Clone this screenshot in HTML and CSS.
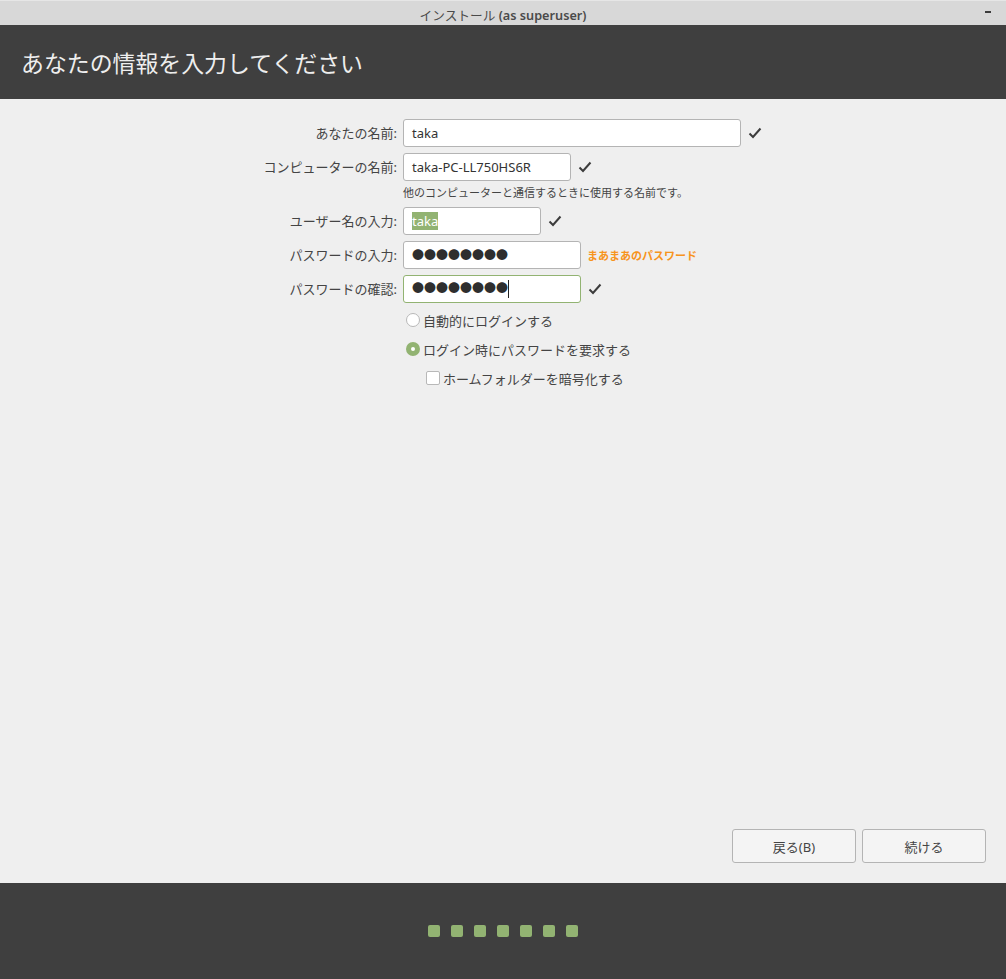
FILE: index.html
```html
<!DOCTYPE html>
<html lang="ja">
<head>
    <meta charset="UTF-8">
    <meta name="viewport" content="width=device-width, initial-scale=1.0">
    <title>インストール (as superuser)</title>
    <link rel="stylesheet" href="styles.css">
</head>
<body>
    <div class="window">
        <div class="titlebar">
            <span class="titlebar-text">インストール <b>(as superuser)</b></span>
            <span class="minimize"></span>
        </div>

        <div class="header">
            <h1>あなたの情報を入力してください</h1>
        </div>

        <div class="content">
            <div class="form">
                <div class="row">
                    <div class="label">あなたの名前:</div>
                    <div class="field field-name">taka</div>
                    <svg class="check" viewBox="0 0 14 12"><path d="M1.5 6.5 5 10 12.5 1.5"/></svg>
                </div>
                <div class="row">
                    <div class="label">コンピューターの名前:</div>
                    <div class="field field-host">taka-PC-LL750HS6R</div>
                    <svg class="check" viewBox="0 0 14 12"><path d="M1.5 6.5 5 10 12.5 1.5"/></svg>
                </div>
                <div class="hint">他のコンピューターと通信するときに使用する名前です。</div>
                <div class="row">
                    <div class="label">ユーザー名の入力:</div>
                    <div class="field field-user"><span class="selected">taka</span></div>
                    <svg class="check" viewBox="0 0 14 12"><path d="M1.5 6.5 5 10 12.5 1.5"/></svg>
                </div>
                <div class="row">
                    <div class="label">パスワードの入力:</div>
                    <div class="field field-pass"><span class="dots">●●●●●●●●</span></div>
                    <span class="strength">まあまあのパスワード</span>
                </div>
                <div class="row">
                    <div class="label">パスワードの確認:</div>
                    <div class="field field-pass focused"><span class="dots">●●●●●●●●</span><span class="caret"></span></div>
                    <svg class="check" viewBox="0 0 14 12"><path d="M1.5 6.5 5 10 12.5 1.5"/></svg>
                </div>

                <div class="option option-first">
                    <span class="radio"></span>
                    <span>自動的にログインする</span>
                </div>
                <div class="option">
                    <span class="radio checked"></span>
                    <span>ログイン時にパスワードを要求する</span>
                </div>
                <div class="option option-sub">
                    <span class="checkbox"></span>
                    <span>ホームフォルダーを暗号化する</span>
                </div>
            </div>

            <div class="buttons">
                <button>戻る(B)</button>
                <button>続ける</button>
            </div>
        </div>

        <div class="footer">
            <span class="step"></span>
            <span class="step"></span>
            <span class="step"></span>
            <span class="step"></span>
            <span class="step"></span>
            <span class="step"></span>
            <span class="step"></span>
        </div>
    </div>
</body>
</html>
```

FILE: styles.css
```css
* {
    box-sizing: border-box;
}

body {
    margin: 0;
    font-family: "Noto Sans", "Noto Sans CJK JP", sans-serif;
    font-size: 13px;
    color: #444444;
    background-color: #efefef;
}

.window {
    display: flex;
    flex-direction: column;
    height: 979px;
}

.titlebar {
    position: relative;
    height: 25px;
    padding-top: 5px;
    flex-shrink: 0;
    text-align: center;
    font-size: 12.7px;
    line-height: 18px;
    color: #4a4a4a;
    background-color: #d8d8d8;
    border-top: 1px solid #e6e6e6;
}

.titlebar b {
    font-weight: 600;
}

.minimize {
    position: absolute;
    top: 10px;
    right: 15px;
    width: 6px;
    height: 2px;
    background-color: #3c3c3c;
}

.header {
    display: flex;
    align-items: center;
    height: 74px;
    padding-left: 21px;
    flex-shrink: 0;
    background-color: #3f3f3f;
}

.header h1 {
    margin: 0;
    font-size: 22.9px;
    font-weight: 400;
    color: #eeeeee;
}

.content {
    display: flex;
    flex-direction: column;
    flex: 1;
    justify-content: space-between;
    padding: 20px 20px 20px 0;
}

.form {
    display: flex;
    flex-direction: column;
}

.row {
    display: flex;
    align-items: center;
    margin-bottom: 6px;
}

.label {
    width: 397px;
    margin-right: 6px;
    padding-bottom: 2px;
    text-align: right;
}

.field {
    height: 28px;
    padding-left: 8px;
    line-height: 26px;
    color: #333333;
    background-color: #ffffff;
    border: 1px solid #b4b4b4;
    border-radius: 3px;
}

.field-name { width: 338px; }
.field-host { width: 168px; }
.field-user { width: 138px; }
.field-pass { width: 178px; }

.focused {
    display: flex;
    border-color: #92b372;
}

.selected {
    color: #ffffff;
    background-color: #92b372;
}

.dots {
    font-size: 12px;
    color: #2e2e2e;
}

.caret {
    width: 1px;
    height: 18px;
    margin-top: 4px;
    background-color: #222222;
}

.check {
    width: 14px;
    height: 12px;
    margin-left: 7px;
    fill: none;
    stroke: #3c3c3c;
    stroke-width: 2;
}

.strength {
    margin-left: 6px;
    font-size: 11px;
    font-weight: 700;
    color: #f7941d;
}

.hint {
    margin: -2px 0 6px 403px;
    font-size: 11px;
    line-height: 16px;
}

.option {
    display: flex;
    align-items: center;
    height: 20px;
    margin: 9px 0 0 406px;
}

.option-first {
    margin-top: 1px;
}

.option-sub {
    margin-left: 426px;
}

.radio {
    width: 14px;
    height: 14px;
    margin-right: 3px;
    background-color: #ffffff;
    border: 1px solid #b8b8b8;
    border-radius: 50%;
}

.radio.checked {
    border: 5px solid #92b372;
    background-color: #ffffff;
}

.checkbox {
    width: 14px;
    height: 14px;
    margin-right: 3px;
    background-color: #ffffff;
    border: 1px solid #b8b8b8;
    border-radius: 2px;
}

.buttons {
    display: flex;
    justify-content: flex-end;
    gap: 6px;
}

button {
    width: 124px;
    height: 34px;
    font: inherit;
    color: #444444;
    background-color: #f4f4f4;
    border: 1px solid #b4b4b4;
    border-radius: 3px;
}

.footer {
    display: flex;
    justify-content: center;
    align-items: center;
    gap: 11px;
    height: 96px;
    padding-right: 1px;
    flex-shrink: 0;
    background-color: #3f3f3f;
}

.step {
    width: 12px;
    height: 12px;
    background-color: #92b372;
    border-radius: 2px;
}
```
